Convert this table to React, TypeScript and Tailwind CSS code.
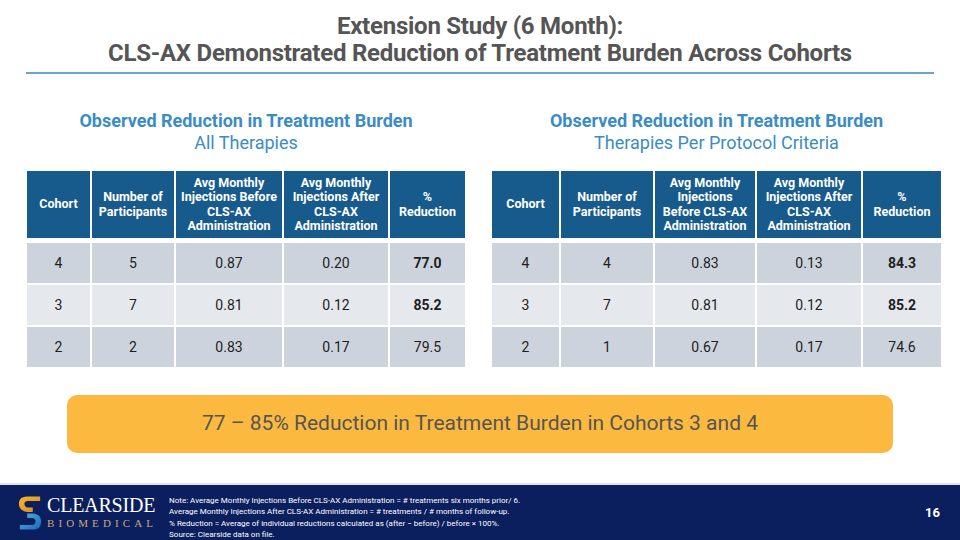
import React from "react";

type Row = { c: string; n: string; b: string; a: string; r: string; bold: boolean };

const leftRows: Row[] = [
  { c: "4", n: "5", b: "0.87", a: "0.20", r: "77.0", bold: true },
  { c: "3", n: "7", b: "0.81", a: "0.12", r: "85.2", bold: true },
  { c: "2", n: "2", b: "0.83", a: "0.17", r: "79.5", bold: false },
];
const rightRows: Row[] = [
  { c: "4", n: "4", b: "0.83", a: "0.13", r: "84.3", bold: true },
  { c: "3", n: "7", b: "0.81", a: "0.12", r: "85.2", bold: true },
  { c: "2", n: "1", b: "0.67", a: "0.17", r: "74.6", bold: false },
];

function DataTable({
  cols,
  headers,
  rows,
}: {
  cols: string;
  headers: React.ReactNode[];
  rows: Row[];
}) {
  return (
    <div className={`grid ${cols} gap-[2px]`}>
      {headers.map((h, i) => (
        <div
          key={i}
          className="h-[67px] bg-[#175a8c] text-white font-bold text-[12.5px] leading-[14.5px] flex items-center justify-center text-center"
        >
          {h}
        </div>
      ))}
      <div className="col-span-5 h-[1px]" />
      {rows.map((r, ri) => {
        const bg = ri === 1 ? "bg-[#e5e8ed]" : "bg-[#cdd3dc]";
        return [r.c, r.n, r.b, r.a, r.r].map((v, ci) => (
          <div
            key={`${ri}-${ci}`}
            className={`h-[40px] ${bg} flex items-center justify-center text-[14px] text-[#1e1e1e] ${
              ci === 4 && r.bold ? "font-bold" : ""
            }`}
          >
            {v}
          </div>
        ));
      })}
    </div>
  );
}

function Logo() {
  return (
    <div className="flex items-center">
      <svg width="24" height="38" viewBox="0 0 26 40">
        <defs>
          <linearGradient id="gold" x1="0" y1="0" x2="1" y2="1">
            <stop offset="0" stopColor="#f7b733" />
            <stop offset="1" stopColor="#d9861a" />
          </linearGradient>
          <linearGradient id="blue" x1="0" y1="0" x2="1" y2="1">
            <stop offset="0" stopColor="#4fb3e8" />
            <stop offset="1" stopColor="#1c67b1" />
          </linearGradient>
        </defs>
        <path
          d="M24 2 L10 2 C3 2 1 6 1 10 C1 15 4 18 10 19 L16 19 L16 14 L11 14 C8 14 7 12 7 10 C7 8 8 7 11 7 L24 7 Z"
          fill="url(#gold)"
        />
        <path
          d="M2 38 L16 38 C23 38 25 34 25 29 C25 24 22 21 16 20.5 L10 20.5 L10 25.5 L15 25.5 C18 25.5 19 27 19 29 C19 31 18 33 15 33 L2 33 Z"
          fill="url(#blue)"
        />
      </svg>
      <div className="ml-[5px] flex flex-col">
        <div
          className="text-white text-[20px] leading-[20px] tracking-[-0.2px]"
          style={{ fontFamily: '"Liberation Serif", "DejaVu Serif", serif' }}
        >
          CLEARSIDE
        </div>
        <div
          className="text-[#c8aa78] text-[11px] leading-[13px] tracking-[4.1px] mt-[2px]"
          style={{ fontFamily: '"Liberation Serif", "DejaVu Serif", serif' }}
        >
          BIOMEDICAL
        </div>
      </div>
    </div>
  );
}

export default function App() {
  return (
    <div
      className="w-[960px] h-[540px] bg-white flex flex-col overflow-hidden"
      style={{ fontFamily: 'Roboto, "Liberation Sans", sans-serif' }}
    >
      <div className="pt-[13px] text-center text-[#555555] font-bold text-[24px] leading-[27px] tracking-[-0.25px]">
        <div>Extension Study (6 Month):</div>
        <div>CLS-AX Demonstrated Reduction of Treatment Burden Across Cohorts</div>
      </div>
      <div className="mx-[26px] mt-[5px] h-[2px] bg-[#6aa6c9]" />

      <div className="flex mt-[36px] px-[27px] gap-[27px]">
        <div className="w-[438px] flex flex-col">
          <div className="text-center text-[#3a8cc5] text-[18px] leading-[22px]">
            <div className="font-bold">Observed Reduction in Treatment Burden</div>
            <div>All Therapies</div>
          </div>
          <div className="mt-[17px]">
            <DataTable
              cols="grid-cols-[63px_82px_106px_104px_75px]"
              headers={[
                "Cohort",
                <span key="1">Number of<br />Participants</span>,
                <span key="2">Avg Monthly<br />Injections Before<br />CLS-AX<br />Administration</span>,
                <span key="3">Avg Monthly<br />Injections After<br />CLS-AX<br />Administration</span>,
                <span key="4">%<br />Reduction</span>,
              ]}
              rows={leftRows}
            />
          </div>
        </div>
        <div className="w-[449px] flex flex-col">
          <div className="text-center text-[#3a8cc5] text-[18px] leading-[22px]">
            <div className="font-bold">Observed Reduction in Treatment Burden</div>
            <div>Therapies Per Protocol Criteria</div>
          </div>
          <div className="mt-[17px]">
            <DataTable
              cols="grid-cols-[67px_92px_100px_104px_78px]"
              headers={[
                "Cohort",
                <span key="1">Number of<br />Participants</span>,
                <span key="2">Avg Monthly<br />Injections<br />Before CLS-AX<br />Administration</span>,
                <span key="3">Avg Monthly<br />Injections After<br />CLS-AX<br />Administration</span>,
                <span key="4">%<br />Reduction</span>,
              ]}
              rows={rightRows}
            />
          </div>
        </div>
      </div>

      <div className="mx-[67px] mt-[28px] h-[58px] rounded-[10px] bg-[#fbb93f] flex items-center justify-center text-[#555555] text-[21px]">
        77 – 85% Reduction in Treatment Burden in Cohorts 3 and 4
      </div>

      <div className="mt-auto h-[57px] bg-[#0b1f5e] border-t-[2px] border-[#dde3ee] flex items-center pl-[18px] pr-[20px]">
        <Logo />
        <div className="ml-[12px] text-white text-[8px] leading-[11.5px] pt-[10px]">
          <div>Note: Average Monthly Injections Before CLS-AX Administration = # treatments six months prior/ 6.</div>
          <div>Average Monthly Injections After CLS-AX Administration = # treatments / # months of follow-up.</div>
          <div>% Reduction = Average of individual reductions calculated as (after − before) / before × 100%.</div>
          <div>Source: Clearside data on file.</div>
        </div>
        <div className="ml-auto text-white font-bold text-[13px]">16</div>
      </div>
    </div>
  );
}
